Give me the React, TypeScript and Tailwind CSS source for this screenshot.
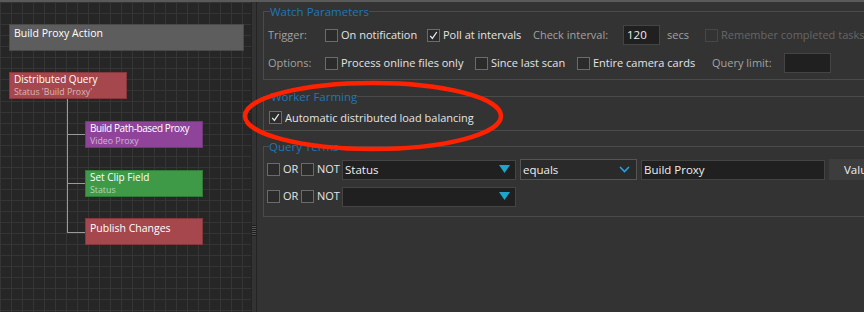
import React from 'react';

const font = { fontFamily: '"Open Sans", "Liberation Sans", sans-serif' };

function Box({ checked, disabled }: { checked?: boolean; disabled?: boolean }) {
  return (
    <span
      className={`inline-flex w-[13px] h-[13px] shrink-0 items-center justify-center border ${
        disabled ? 'border-[#474747] bg-[#333]' : 'border-[#6b6b6b] bg-[#2b2b2b]'
      }`}
    >
      {checked && (
        <svg width="9" height="9" viewBox="0 0 9 9" fill="none">
          <path d="M1.2 4.8 L3.4 7.4 L7.8 1" stroke="#e6e6e6" strokeWidth="1.3" />
        </svg>
      )}
    </span>
  );
}

function Check({ label, checked, disabled }: { label: string; checked?: boolean; disabled?: boolean }) {
  return (
    <span className="flex items-center gap-[3px]">
      <Box checked={checked} disabled={disabled} />
      <span className={disabled ? 'text-[#666]' : 'text-[#e4e4e4]'}>{label}</span>
    </span>
  );
}

function Node({ title, sub, color, className, tight }: { title: string; sub?: string; color: string; className: string; tight?: boolean }) {
  return (
    <div className={`absolute h-[27px] px-[4px] whitespace-nowrap border border-black/20 ${color} ${className}`}>
      <div className={`${sub ? 'text-[10px] -mt-[1px]' : 'text-[10.5px] pt-[2px]'} leading-[14px] text-white ${tight ? 'tracking-[-0.4px]' : ''}`}>{title}</div>
      {sub && <div className="text-[8.8px] leading-[12px] text-white/60">{sub}</div>}
    </div>
  );
}

function Group({ title, children, className }: { title: string; children: React.ReactNode; className?: string }) {
  return (
    <fieldset className={`border border-[#4b4b4b] ml-[6px] ${className ?? ''}`}>
      <legend className="ml-[2px] text-[11.5px] text-[#1f76b8] leading-none">{title}</legend>
      {children}
    </fieldset>
  );
}

const Tri = () => (
  <svg width="11" height="9" viewBox="0 0 11 9"><path d="M0 0 H11 L5.5 8 Z" fill="#1ea5cc" /></svg>
);

export default function App() {
  return (
    <div className="w-[864px] h-[312px] overflow-hidden relative flex flex-col bg-[#333333] text-[11px]" style={font}>
      <div className="h-[2px] bg-[#5a5a5a]" />
      <div className="flex flex-1 min-h-0">
        {/* node canvas */}
        <div className="relative w-[251px] bg-[#262626] bg-[linear-gradient(to_right,#353535_1px,transparent_1px),linear-gradient(to_bottom,#353535_1px,transparent_1px)] bg-[size:11px_11px]">
          <div className="absolute left-[9px] top-[22px] w-[235px] h-[27px] bg-[#5d5d5d] border border-black/20 px-[4px] pt-[3px] text-[10.5px] text-white leading-none">
            Build Proxy Action
          </div>
          <Node title="Distributed Query" sub="Status 'Build Proxy'" color="bg-[#a5474c]" className="left-[9px] top-[70px] w-[118px]" />
          <div className="absolute left-[67px] top-[97px] w-px h-[134px] bg-[#9a9a9a]" />
          <div className="absolute left-[67px] top-[132px] w-[18px] h-px bg-[#9a9a9a]" />
          <div className="absolute left-[67px] top-[181px] w-[18px] h-px bg-[#9a9a9a]" />
          <div className="absolute left-[67px] top-[230px] w-[18px] h-px bg-[#9a9a9a]" />
          <Node title="Build Path-based Proxy" sub="Video Proxy" color="bg-[#8f449a]" className="left-[85px] top-[119px] w-[118px]" tight />
          <Node title="Set Clip Field" sub="Status" color="bg-[#3e9a46]" className="left-[85px] top-[168px] w-[118px]" />
          <Node title="Publish Changes" color="bg-[#a5474c]" className="left-[85px] top-[216px] w-[118px]" />
        </div>
        {/* splitter */}
        <div className="w-[6px] border-l border-r border-[#242424] bg-[#333] flex items-start justify-center pt-[223px]">
          <div className="w-[4px] h-[11px] bg-[repeating-linear-gradient(to_bottom,#1c1c1c_0px,#1c1c1c_1px,#555_1px,#555_2px)]" />
        </div>
        {/* parameters */}
        <div className="flex-1 min-w-0 pt-[4px] flex flex-col">
          <Group title="Watch Parameters" className="mr-[-40px] h-[74px] pl-[4px]">
            <div className="flex items-center h-[19px] mt-[8px] whitespace-nowrap">
              <span className="text-[#a2a2a2] w-[57px]">Trigger:</span>
              <span className="w-[102px]"><Check label="On notification" /></span>
              <span className="w-[106px]"><Check label="Poll at intervals" checked /></span>
              <span className="text-[#a2a2a2] w-[90px]">Check interval:</span>
              <span className="w-[37px] h-[20px] bg-[#202020] border border-[#444] text-[#eee] text-[11.5px] pl-[3px] leading-[18px]">120</span>
              <span className="ml-[7px] w-[38px] text-[#a2a2a2]">secs</span>
              <Check label="Remember completed tasks" disabled />
            </div>
            <div className="flex items-center h-[19px] mt-[9px] whitespace-nowrap">
              <span className="text-[#a2a2a2] w-[57px]">Options:</span>
              <span className="w-[150px]"><Check label="Process online files only" /></span>
              <span className="w-[102px]"><Check label="Since last scan" /></span>
              <span className="w-[135px]"><Check label="Entire camera cards" /></span>
              <span className="text-[#a2a2a2] w-[72px]">Query limit:</span>
              <span className="w-[47px] h-[20px] bg-[#202020] border border-[#444]" />
            </div>
          </Group>
          <Group title="Worker Farming" className="mr-[-40px] mt-[11px] h-[40px] pl-[5px]">
            <div className="flex items-center mt-[7px] whitespace-nowrap">
              <Check label="Automatic distributed load balancing" checked />
            </div>
          </Group>
          <Group title="Query Terms" className="mt-[10px] mr-[-40px] h-[76px] pl-[3px]">
            <div className="flex items-center mt-[7px] h-[20px] whitespace-nowrap">
              <span className="w-[34px]"><Check label="OR" /></span>
              <span className="w-[41px]"><Check label="NOT" /></span>
              <span className="w-[174px] h-[20px] bg-[#202020] border border-[#444] flex items-center justify-between pl-[2px] pr-[5px] text-[#eee] text-[11.5px]">
                Status
                <Tri />
              </span>
              <span className="ml-[4px] w-[117px] h-[21px] bg-[#2a2a2a] border border-[#555] flex items-center justify-between pl-[2px] pr-[6px] text-[#eee] text-[11.5px]">
                equals
                <svg width="11" height="7" viewBox="0 0 11 7" fill="none"><path d="M1 1 L5.5 5.5 L10 1" stroke="#2b9ee0" strokeWidth="1.6" /></svg>
              </span>
              <span className="ml-[4px] w-[184px] h-[20px] bg-[#202020] border border-[#444] pl-[2px] text-[#eee] text-[11.5px] leading-[18px]">Build Proxy</span>
              <span className="ml-[4px] w-[60px] h-[21px] bg-[#3d3d3d] pl-[15px] text-[#eee] text-[11.5px] leading-[21px]">Value</span>
            </div>
            <div className="flex items-center mt-[7px] h-[20px] whitespace-nowrap">
              <span className="w-[34px]"><Check label="OR" /></span>
              <span className="w-[41px]"><Check label="NOT" /></span>
              <span className="w-[174px] h-[20px] bg-[#202020] border border-[#444] flex items-center justify-end pr-[5px]">
                <Tri />
              </span>
            </div>
          </Group>
        </div>
      </div>
      {/* red annotation ellipse */}
      <svg className="absolute left-0 top-0 pointer-events-none" width="864" height="312">
        <ellipse cx="373" cy="116" rx="128" ry="33" fill="none" stroke="#ff2200" strokeWidth="4.5" />
      </svg>
    </div>
  );
}
